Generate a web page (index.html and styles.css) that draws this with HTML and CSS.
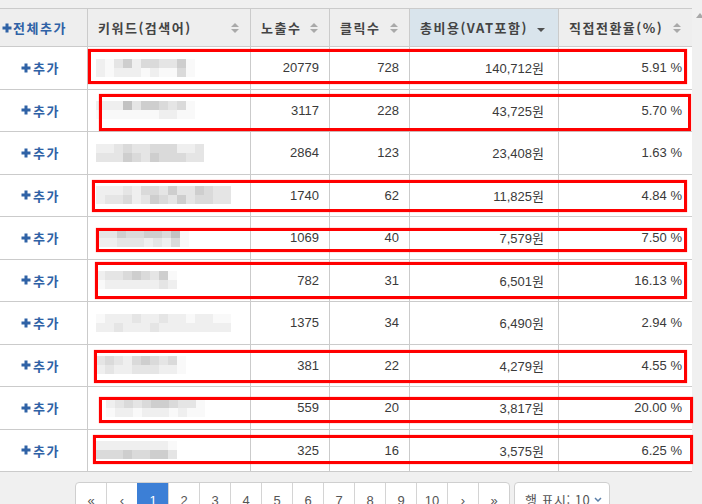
FILE: index.html
```html
<!DOCTYPE html>
<html lang="ko">
<head>
<meta charset="utf-8">
<title>키워드 목록</title>
<link rel="stylesheet" href="styles.css">
</head>
<body>
<div class="page">
  <div class="main">
    <div class="grid-wrap">
      <div class="table">
        <div class="th th-add"><svg class="plus" viewBox="0 0 10 10"><path d="M5 0.5V9.5M0.5 5H9.5"/></svg>전체추가</div>
        <div class="th"><span>키워드(검색어)</span><span class="sort"><i class="up"></i><i class="dn"></i></span></div>
        <div class="th"><span>노출수</span><span class="sort"><i class="up"></i><i class="dn"></i></span></div>
        <div class="th"><span>클릭수</span><span class="sort"><i class="up"></i><i class="dn"></i></span></div>
        <div class="th th-active"><span>총비용(VAT포함)</span><span class="sorted"></span></div>
        <div class="th"><span>직접전환율(%)</span><span class="sort"><i class="up"></i><i class="dn"></i></span></div>

        <div class="td add"><svg class="plus" viewBox="0 0 10 10"><path d="M5 0.5V9.5M0.5 5H9.5"/></svg>추가</div>
        <div class="td kw"><div class="blur"><div class="br"><i class="c1"></i><i class="c0"></i><i class="c2"></i><i class="c4"></i><i class="c1"></i><i class="c3"></i><i class="c3"></i><i class="c2"></i><i class="c2"></i><i class="c4"></i><i class="c0"></i></div><div class="br"><i class="c1"></i><i class="c0"></i><i class="c1"></i><i class="c1"></i><i class="c1"></i><i class="c0"></i><i class="c1"></i><i class="c0"></i><i class="c0"></i><i class="c3"></i><i class="c0"></i></div></div></div>
        <div class="td num">20779</div>
        <div class="td num">728</div>
        <div class="td num won">140,712원</div>
        <div class="td num">5.91 %</div>

        <div class="td add"><svg class="plus" viewBox="0 0 10 10"><path d="M5 0.5V9.5M0.5 5H9.5"/></svg>추가</div>
        <div class="td kw"><div class="blur"><div class="br"><i class="c1"></i><i class="c1"></i><i class="c1"></i><i class="c5"></i><i class="c2"></i><i class="c4"></i><i class="c4"></i><i class="c3"></i><i class="c2"></i><i class="c3"></i><i class="c0"></i></div><div class="br"><i class="c0"></i><i class="c0"></i><i class="c0"></i><i class="c0"></i><i class="c0"></i><i class="c0"></i><i class="c0"></i><i class="c1"></i><i class="c1"></i><i class="c0"></i><i class="c0"></i></div></div></div>
        <div class="td num">3117</div>
        <div class="td num">228</div>
        <div class="td num won">43,725원</div>
        <div class="td num">5.70 %</div>

        <div class="td add"><svg class="plus" viewBox="0 0 10 10"><path d="M5 0.5V9.5M0.5 5H9.5"/></svg>추가</div>
        <div class="td kw"><div class="blur"><div class="br"><i class="c1"></i><i class="c1"></i><i class="c2"></i><i class="c3"></i><i class="c2"></i><i class="c2"></i><i class="c3"></i><i class="c3"></i><i class="c3"></i><i class="c1"></i><i class="c1"></i><i class="c2"></i></div><div class="br"><i class="c2"></i><i class="c2"></i><i class="c2"></i><i class="c4"></i><i class="c3"></i><i class="c2"></i><i class="c4"></i><i class="c3"></i><i class="c3"></i><i class="c3"></i><i class="c2"></i><i class="c2"></i></div></div></div>
        <div class="td num">2864</div>
        <div class="td num">123</div>
        <div class="td num won">23,408원</div>
        <div class="td num">1.63 %</div>

        <div class="td add"><svg class="plus" viewBox="0 0 10 10"><path d="M5 0.5V9.5M0.5 5H9.5"/></svg>추가</div>
        <div class="td kw"><div class="blur"><div class="br"><i class="c1"></i><i class="c1"></i><i class="c1"></i><i class="c2"></i><i class="c1"></i><i class="c3"></i><i class="c3"></i><i class="c2"></i><i class="c4"></i><i class="c2"></i><i class="c2"></i><i class="c4"></i><i class="c3"></i><i class="c2"></i><i class="c2"></i></div><div class="br"><i class="c1"></i><i class="c2"></i><i class="c2"></i><i class="c3"></i><i class="c1"></i><i class="c2"></i><i class="c4"></i><i class="c3"></i><i class="c2"></i><i class="c4"></i><i class="c2"></i><i class="c3"></i><i class="c3"></i><i class="c2"></i><i class="c2"></i></div></div></div>
        <div class="td num">1740</div>
        <div class="td num">62</div>
        <div class="td num won">11,825원</div>
        <div class="td num">4.84 %</div>

        <div class="td add"><svg class="plus" viewBox="0 0 10 10"><path d="M5 0.5V9.5M0.5 5H9.5"/></svg>추가</div>
        <div class="td kw"><div class="blur shift"><div class="br"><i class="c2"></i><i class="c2"></i><i class="c4"></i><i class="c3"></i><i class="c3"></i><i class="c4"></i><i class="c4"></i><i class="c3"></i><i class="c5"></i><i class="c0"></i></div><div class="br"><i class="c1"></i><i class="c1"></i><i class="c2"></i><i class="c2"></i><i class="c2"></i><i class="c1"></i><i class="c2"></i><i class="c1"></i><i class="c3"></i><i class="c0"></i></div></div></div>
        <div class="td num">1069</div>
        <div class="td num">40</div>
        <div class="td num won">7,579원</div>
        <div class="td num">7.50 %</div>

        <div class="td add"><svg class="plus" viewBox="0 0 10 10"><path d="M5 0.5V9.5M0.5 5H9.5"/></svg>추가</div>
        <div class="td kw"><div class="blur"><div class="br"><i class="c1"></i><i class="c2"></i><i class="c2"></i><i class="c3"></i><i class="c4"></i><i class="c3"></i><i class="c2"></i><i class="c4"></i><i class="c0"></i></div><div class="br"><i class="c0"></i><i class="c1"></i><i class="c1"></i><i class="c1"></i><i class="c1"></i><i class="c1"></i><i class="c1"></i><i class="c2"></i><i class="c1"></i></div></div></div>
        <div class="td num">782</div>
        <div class="td num">31</div>
        <div class="td num won">6,501원</div>
        <div class="td num">16.13 %</div>

        <div class="td add"><svg class="plus" viewBox="0 0 10 10"><path d="M5 0.5V9.5M0.5 5H9.5"/></svg>추가</div>
        <div class="td kw"><div class="blur"><div class="br"><i class="c0"></i><i class="c1"></i><i class="c1"></i><i class="c1"></i><i class="c2"></i><i class="c1"></i><i class="c1"></i><i class="c2"></i><i class="c1"></i><i class="c1"></i><i class="c0"></i><i class="c1"></i><i class="c1"></i><i class="c0"></i><i class="c0"></i></div><div class="br"><i class="c1"></i><i class="c1"></i><i class="c2"></i><i class="c1"></i><i class="c1"></i><i class="c1"></i><i class="c2"></i><i class="c1"></i><i class="c1"></i><i class="c1"></i><i class="c1"></i><i class="c1"></i><i class="c1"></i><i class="c1"></i><i class="c1"></i></div></div></div>
        <div class="td num">1375</div>
        <div class="td num">34</div>
        <div class="td num won">6,490원</div>
        <div class="td num">2.94 %</div>

        <div class="td add"><svg class="plus" viewBox="0 0 10 10"><path d="M5 0.5V9.5M0.5 5H9.5"/></svg>추가</div>
        <div class="td kw"><div class="blur"><div class="br"><i class="c2"></i><i class="c3"></i><i class="c2"></i><i class="c1"></i><i class="c3"></i><i class="c4"></i><i class="c3"></i><i class="c2"></i><i class="c3"></i><i class="c0"></i></div><div class="br"><i class="c1"></i><i class="c2"></i><i class="c1"></i><i class="c1"></i><i class="c2"></i><i class="c2"></i><i class="c2"></i><i class="c1"></i><i class="c1"></i><i class="c0"></i></div></div></div>
        <div class="td num">381</div>
        <div class="td num">22</div>
        <div class="td num won">4,279원</div>
        <div class="td num">4.55 %</div>

        <div class="td add"><svg class="plus" viewBox="0 0 10 10"><path d="M5 0.5V9.5M0.5 5H9.5"/></svg>추가</div>
        <div class="td kw"><div class="blur shift2"><div class="br"><i class="c1"></i><i class="c2"></i><i class="c3"></i><i class="c2"></i><i class="c3"></i><i class="c4"></i><i class="c4"></i><i class="c3"></i><i class="c2"></i><i class="c2"></i><i class="c0"></i></div><div class="br"><i class="c0"></i><i class="c1"></i><i class="c1"></i><i class="c0"></i><i class="c1"></i><i class="c1"></i><i class="c1"></i><i class="c0"></i><i class="c1"></i><i class="c0"></i><i class="c0"></i></div></div></div>
        <div class="td num">559</div>
        <div class="td num">20</div>
        <div class="td num won">3,817원</div>
        <div class="td num">20.00 %</div>

        <div class="td add"><svg class="plus" viewBox="0 0 10 10"><path d="M5 0.5V9.5M0.5 5H9.5"/></svg>추가</div>
        <div class="td kw"><div class="blur"><div class="br"><i class="c1"></i><i class="c1"></i><i class="c1"></i><i class="c1"></i><i class="c1"></i><i class="c1"></i><i class="c1"></i><i class="c1"></i><i class="c0"></i></div><div class="br"><i class="c3"></i><i class="c3"></i><i class="c3"></i><i class="c4"></i><i class="c3"></i><i class="c3"></i><i class="c4"></i><i class="c4"></i><i class="c2"></i></div></div></div>
        <div class="td num">325</div>
        <div class="td num">16</div>
        <div class="td num won">3,575원</div>
        <div class="td num">6.25 %</div>
      </div>

      <div class="mark m1"></div>
      <div class="mark m2"></div>
      <div class="mark m4"></div>
      <div class="mark m5"></div>
      <div class="mark m6"></div>
      <div class="mark m8"></div>
      <div class="mark m9"></div>
      <div class="mark m10"></div>
    </div>

    <div class="pager">
      <div class="pages">
        <span class="pg">«</span>
        <span class="pg">‹</span>
        <span class="pg active">1</span>
        <span class="pg">2</span>
        <span class="pg">3</span>
        <span class="pg">4</span>
        <span class="pg">5</span>
        <span class="pg">6</span>
        <span class="pg">7</span>
        <span class="pg">8</span>
        <span class="pg">9</span>
        <span class="pg">10</span>
        <span class="pg">›</span>
        <span class="pg">»</span>
      </div>
      <div class="rows-select">행 표시: 10 <svg class="chev" viewBox="0 0 8 5"><path d="M1 1L4 4L7 1"/></svg></div>
    </div>
  </div>
  <div class="scrollbar"><span class="arrow"></span></div>
</div>
</body>
</html>
```

FILE: styles.css
```css
html, body {
  margin: 0;
  padding: 0;
  background: #f0f0f0;
  overflow: hidden;
}

body {
  width: 702px;
  height: 504px;
  font-family: "Liberation Sans", "Noto Sans CJK KR", sans-serif;
  color: #333;
}

.page {
  display: flex;
  height: 504px;
}

.main {
  width: 692px;
  padding-top: 8px;
}

.scrollbar {
  width: 10px;
  overflow: hidden;
}

.arrow {
  display: block;
  width: 0;
  height: 0;
  margin: 13px 0 0 4px;
  border-left: 4px solid transparent;
  border-right: 4px solid transparent;
  border-bottom: 5px solid #a8a8a8;
}

.grid-wrap {
  position: relative;
}

.table {
  display: grid;
  grid-template-columns: 87px 163px 79px 80px 149px 134px;
  grid-template-rows: 38px repeat(10, 42.5px);
  border-top: 1px solid #cbcbcb;
  background: #fff;
}

.th, .td {
  box-sizing: border-box;
  border-bottom: 1px solid #cbcbcb;
  border-left: 1px solid #cbcbcb;
  display: flex;
  align-items: center;
  min-width: 0;
}

.th:nth-child(6n+1), .td:nth-child(6n+1) {
  border-left: 0;
}

.th {
  background: #eeeeee;
  justify-content: space-between;
  padding: 0 11px 0 10px;
  font-family: "Noto Sans CJK KR", sans-serif;
  font-size: 13px;
  font-weight: 700;
  letter-spacing: 1.5px;
  color: #444;
}

.th-active {
  background: #d9e4ec;
}

.th-add {
  justify-content: flex-start;
  padding-left: 2px;
  color: #2f62a6;
  letter-spacing: 1.5px;
}

.plus {
  width: 10px;
  height: 10px;
  margin-right: 1px;
  flex: none;
}

.plus path {
  stroke: #2f62a6;
  stroke-width: 3;
  fill: none;
}

.sort {
  display: flex;
  flex-direction: column;
  gap: 2px;
}

.sort i {
  display: block;
  width: 0;
  height: 0;
  border-left: 4px solid transparent;
  border-right: 4px solid transparent;
}

.sort .up {
  border-bottom: 4px solid #a9a9a9;
}

.sort .dn {
  border-top: 4px solid #a9a9a9;
}

.sorted {
  width: 0;
  height: 0;
  margin-top: 4px;
  margin-right: 2px;
  border-left: 4px solid transparent;
  border-right: 4px solid transparent;
  border-top: 4px solid #505050;
}

.td.add {
  justify-content: center;
  font-family: "Noto Sans CJK KR", sans-serif;
  font-size: 13px;
  font-weight: 700;
  letter-spacing: 1.5px;
  color: #2f62a6;
  padding-right: 6px;
}

.td.add .plus {
  margin-right: 2px;
}

.td.kw {
  padding-left: 8px;
}

.td.num {
  justify-content: flex-end;
  padding-right: 10px;
  font-family: "Liberation Sans Narrow", "Liberation Sans", "Noto Sans CJK KR", sans-serif;
  font-size: 13px;
  color: #3a3a3a;
}

.td.won {
  padding-right: 14px;
}

.blur {
  display: flex;
  flex-direction: column;
}

.blur.shift {
  margin-left: 3px;
}

.blur.shift2 {
  margin-left: 10px;
}

.br {
  display: flex;
}

.br i {
  display: block;
  width: 9px;
  height: 9px;
}

.c0 { background: #f9f9f9; }
.c1 { background: #efefef; }
.c2 { background: #e5e5e5; }
.c3 { background: #dadada; }
.c4 { background: #cecece; }
.c5 { background: #c2c2c2; }

.mark {
  position: absolute;
  box-sizing: border-box;
  border: 3px solid #ff0000;
  box-shadow: 0 0 1px rgba(255, 0, 0, 0.6);
}

.m1  { left: 88px; top: 41px;  width: 599px; height: 35px; }
.m2  { left: 99px; top: 86px;  width: 592px; height: 37px; }
.m4  { left: 92px; top: 172px; width: 595px; height: 32px; }
.m5  { left: 96px; top: 220px; width: 591px; height: 24px; }
.m6  { left: 95px; top: 254px; width: 592px; height: 37px; }
.m8  { left: 94px; top: 342px; width: 593px; height: 33px; }
.m9  { left: 99px; top: 389px; width: 594px; height: 26px; }
.m10 { left: 93px; top: 427px; width: 600px; height: 29px; }

.pager {
  display: flex;
  gap: 4px;
  padding-left: 75px;
  margin-top: 10px;
}

.pages {
  display: flex;
  border: 1px solid #cfcfcf;
  border-radius: 4px;
  background: #fff;
  overflow: hidden;
}

.pg {
  box-sizing: border-box;
  width: 31px;
  height: 34px;
  display: flex;
  align-items: center;
  justify-content: center;
  border-left: 1px solid #d4d4d4;
  font-size: 13px;
  color: #555;
}

.pg:first-child {
  border-left: 0;
  width: 30px;
}

.pg.active {
  background: #3c7fd6;
  border-left-color: #3c7fd6;
  color: #fff;
}

.rows-select {
  box-sizing: border-box;
  width: 96px;
  height: 34px;
  display: flex;
  align-items: center;
  gap: 4px;
  padding-left: 10px;
  border: 1px solid #cfcfcf;
  border-radius: 4px;
  background: #fff;
  font-family: "Noto Sans CJK KR", sans-serif;
  font-size: 13px;
  letter-spacing: 0.5px;
  color: #555;
}

.chev {
  width: 8px;
  height: 5px;
}

.chev path {
  stroke: #5b7fa8;
  stroke-width: 1.5;
  fill: none;
}
```
